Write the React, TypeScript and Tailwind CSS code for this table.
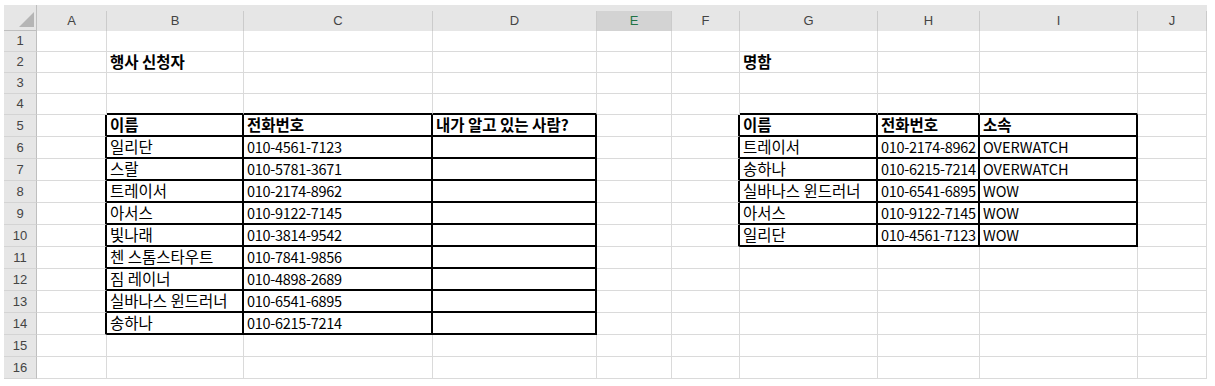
import React from 'react';

type Cell = { text: string; bold?: boolean };

const COLS = [
  { letter: 'A', width: 70 },
  { letter: 'B', width: 137 },
  { letter: 'C', width: 189 },
  { letter: 'D', width: 164 },
  { letter: 'E', width: 75 },
  { letter: 'F', width: 68 },
  { letter: 'G', width: 138 },
  { letter: 'H', width: 102 },
  { letter: 'I', width: 158 },
  { letter: 'J', width: 69 },
];

const ROW_COUNT = 16;
const SELECTED_COL = 4; // E

const applicants = [
  ['일리단', '010-4561-7123'],
  ['스랄', '010-5781-3671'],
  ['트레이서', '010-2174-8962'],
  ['아서스', '010-9122-7145'],
  ['빛나래', '010-3814-9542'],
  ['첸 스톰스타우트', '010-7841-9856'],
  ['짐 레이너', '010-4898-2689'],
  ['실바나스 윈드러너', '010-6541-6895'],
  ['송하나', '010-6215-7214'],
];

const cards = [
  ['트레이서', '010-2174-8962', 'OVERWATCH'],
  ['송하나', '010-6215-7214', 'OVERWATCH'],
  ['실바나스 윈드러너', '010-6541-6895', 'WOW'],
  ['아서스', '010-9122-7145', 'WOW'],
  ['일리단', '010-4561-7123', 'WOW'],
];

const cells: Record<string, Cell> = {
  '2-1': { text: '행사 신청자', bold: true },
  '5-1': { text: '이름', bold: true },
  '5-2': { text: '전화번호', bold: true },
  '5-3': { text: '내가 알고 있는 사람?', bold: true },
  '2-6': { text: '명함', bold: true },
  '5-6': { text: '이름', bold: true },
  '5-7': { text: '전화번호', bold: true },
  '5-8': { text: '소속', bold: true },
};
applicants.forEach(([name, phone], i) => {
  cells[`${6 + i}-1`] = { text: name };
  cells[`${6 + i}-2`] = { text: phone };
});
cards.forEach(([name, phone, org], i) => {
  cells[`${6 + i}-6`] = { text: name };
  cells[`${6 + i}-7`] = { text: phone };
  cells[`${6 + i}-8`] = { text: org };
});

const inTable = (r: number, c: number) =>
  (r >= 5 && r <= 14 && c >= 1 && c <= 3) || (r >= 5 && r <= 10 && c >= 6 && c <= 8);

// hangul renders a bit narrower than Malgun Gothic, digits a bit wider
const sizeFor = (s: string) => {
  if (/[\uac00-\ud7a3]/.test(s)) return 'text-[15.5px]';
  if (/\d/.test(s)) return 'text-[14.5px] tracking-[-0.3px]';
  return 'text-[14.5px]';
};

const App: React.FC = () => {
  const rows = Array.from({ length: ROW_COUNT }, (_, i) => i + 1);

  return (
    <div className="w-[1215px] h-[386px] bg-white pt-[5px] pl-[4px] overflow-hidden">
      <div className="grid grid-cols-[33px_70px_137px_189px_164px_75px_68px_138px_102px_158px_69px] grid-rows-[26px_repeat(4,21px)_repeat(12,22px)] w-fit">
        {/* corner */}
        <div className="bg-[#e6e6e6] border-r border-b border-[#bfbfbf] flex items-end justify-end pr-[2px] pb-[3px]">
          <svg width="15" height="15" viewBox="0 0 15 15">
            <polygon points="15,0 15,15 0,15" fill="#b5b5b5" />
          </svg>
        </div>

        {/* column headers */}
        {COLS.map((col, c) => (
          <div key={col.letter} className="bg-[#e6e6e6] flex flex-col">
            <div
              className={`mt-[6px] flex-1 border-r border-r-[#cbcbcb] flex items-center justify-center pb-[2px] font-['Liberation_Sans',sans-serif] text-[13px] ${
                c === SELECTED_COL
                  ? 'bg-[#d3d3d3] border-b-2 border-b-[#217346] text-[#217346]'
                  : 'border-b border-b-[#bfbfbf] text-[#444444]'
              }`}
            >
              {col.letter}
            </div>
          </div>
        ))}

        {rows.map((r) => (
          <React.Fragment key={r}>
            <div className="bg-[#e6e6e6] border-r border-r-[#bfbfbf] border-b border-b-[#d4d4d4] flex items-center justify-center font-['Liberation_Sans',sans-serif] text-[13px] text-[#444444]">
              {r}
            </div>
            {COLS.map((col, c) => {
              const cell = cells[`${r}-${c}`];
              const rightBlack = inTable(r, c) || inTable(r, c + 1);
              const bottomBlack = inTable(r, c) || inTable(r + 1, c);
              return (
                <div
                  key={col.letter}
                  className={`bg-white flex items-center pl-[3px] whitespace-nowrap overflow-visible font-['Noto_Sans_CJK_KR',sans-serif] text-black ${
                    cell ? sizeFor(cell.text) : 'text-[14.5px]'
                  } ${rightBlack ? 'border-r-2 border-r-black' : 'border-r border-r-[#dadada]'} ${
                    bottomBlack ? 'border-b-2 border-b-black' : 'border-b border-b-[#dadada]'
                  } ${cell?.bold ? 'font-bold' : 'font-normal'}`}
                >
                  {cell?.text}
                </div>
              );
            })}
          </React.Fragment>
        ))}
      </div>
    </div>
  );
};

export default App;
